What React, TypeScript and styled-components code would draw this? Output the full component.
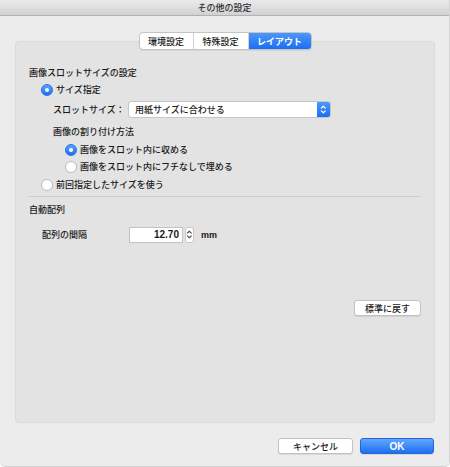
import React, { type FC } from 'react';
import styled, { createGlobalStyle } from 'styled-components';

const GlobalStyle = createGlobalStyle`
  html, body {
    margin: 0;
    padding: 0;
    background: #ffffff;
  }

  body {
    font-family: "Noto Sans CJK JP", "Noto Sans", sans-serif;
    font-size: 9px;
    font-weight: 500;
    color: #1a1a1a;
  }
`;

const Window = styled.div`
  display: flex;
  flex-direction: column;
  width: 449px;
  height: 466px;
  background: #ececec;
  border-right: 1px solid #d6d6d6;
  border-bottom: 1px solid #d2d2d2;
  border-radius: 0 0 5px 5px;
  overflow: hidden;
`;

const TitleBar = styled.div`
  display: flex;
  align-items: center;
  justify-content: center;
  height: 15px;
  background: linear-gradient(#ebebeb, #d2d2d2);
  border-bottom: 1px solid #b1b1b1;
  color: #2e2e2e;
  font-size: 9px;
  line-height: 1;
`;

const Body = styled.div`
  display: flex;
  flex-direction: column;
  padding: 16px 14px 0 15px;
`;

const TabRow = styled.div`
  display: flex;
  justify-content: center;
  margin-bottom: -9px;
  position: relative;
  z-index: 1;
`;

const Tabs = styled.div`
  display: flex;
  height: 16px;
  border: 1px solid #c4c4c4;
  border-radius: 4px;
  background: #ffffff;
  overflow: hidden;
  box-shadow: 0 1px 0 rgba(0, 0, 0, 0.06);
`;

const Tab = styled.div<{ $active?: boolean; $width: number }>`
  display: flex;
  align-items: center;
  justify-content: center;
  width: ${({ $width }) => `${$width}px`};
  color: ${({ $active }) => ($active ? '#ffffff' : '#1a1a1a')};
  background: ${({ $active }) =>
    $active ? 'linear-gradient(#4b98fa, #1b6ef4)' : 'transparent'};
  font-weight: ${({ $active }) => ($active ? 700 : 500)};
  & + & {
    border-left: 1px solid #d2d2d2;
  }
`;

const GroupBox = styled.div`
  display: flex;
  flex-direction: column;
  height: 382px;
  box-sizing: border-box;
  padding: 22px 13px 0 13px;
  background: #e3e3e3;
  border: 1px solid #dadada;
  border-radius: 4px;
`;

const Line = styled.div<{ $indent?: number; $mt?: number }>`
  display: flex;
  align-items: center;
  height: 17px;
  margin-left: ${({ $indent = 0 }) => `${$indent}px`};
  margin-top: ${({ $mt = 0 }) => `${$mt}px`};
  white-space: nowrap;
`;

const RadioDot = styled.span<{ $checked?: boolean }>`
  box-sizing: border-box;
  display: inline-flex;
  align-items: center;
  justify-content: center;
  width: 12px;
  height: 12px;
  margin-right: 3px;
  border-radius: 50%;
  border: 1px solid ${({ $checked }) => ($checked ? '#2a6fe8' : '#b9b9b9')};
  background: ${({ $checked }) =>
    $checked ? 'linear-gradient(#5aa2fb, #1f6ef2)' : '#ffffff'};

  &::after {
    content: '';
    display: ${({ $checked }) => ($checked ? 'block' : 'none')};
    width: 4px;
    height: 4px;
    border-radius: 50%;
    background: #ffffff;
  }
`;

const Label = styled.span<{ $width: number }>`
  display: inline-block;
  width: ${({ $width }) => `${$width}px`};
`;

const Select = styled.div`
  display: flex;
  width: 203px;
  height: 17px;
  box-sizing: border-box;
  border: 1px solid #c6c6c6;
  border-radius: 3px;
  background: #ffffff;
  overflow: hidden;
`;

const SelectText = styled.span`
  flex: 1;
  display: flex;
  align-items: center;
  padding-left: 6px;
`;

const SelectArrow = styled.span`
  display: flex;
  align-items: center;
  justify-content: center;
  width: 13px;
  background: linear-gradient(#4b98fa, #1b6ef4);
`;

const NumberInput = styled.div`
  display: flex;
  align-items: center;
  justify-content: flex-end;
  width: 54px;
  height: 16px;
  box-sizing: border-box;
  padding-right: 3px;
  background: #ffffff;
  border: 1px solid #c3c3c3;
  font-family: "Liberation Sans", "Noto Sans CJK JP", sans-serif;
  font-size: 10px;
  font-weight: 700;
`;

const Stepper = styled.span`
  display: flex;
  align-items: center;
  justify-content: center;
  width: 9px;
  height: 16px;
  box-sizing: border-box;
  margin-left: 2px;
  background: #ffffff;
  border: 1px solid #c6c6c6;
  border-radius: 3px;
`;

const Unit = styled.span`
  margin-left: 7px;
  font-family: "Liberation Sans", sans-serif;
  font-size: 9px;
  font-weight: 700;
`;

const Separator = styled.div`
  height: 1px;
  margin-top: 3px;
  background: #cfcfcf;
`;

const PushButton = styled.button<{ $primary?: boolean; $width: number }>`
  display: flex;
  align-items: center;
  justify-content: center;
  width: ${({ $width }) => `${$width}px`};
  height: 16px;
  padding: 0;
  border: 1px solid ${({ $primary }) => ($primary ? '#2464df' : '#c2c2c2')};
  border-radius: 3px;
  background: ${({ $primary }) =>
    $primary ? 'linear-gradient(#62a6fb, #1e6ff3)' : '#ffffff'};
  color: ${({ $primary }) => ($primary ? '#ffffff' : '#1a1a1a')};
  font-family: ${({ $primary }) =>
    $primary
      ? '"Liberation Sans", sans-serif'
      : '"Noto Sans CJK JP", sans-serif'};
  font-size: ${({ $primary }) => ($primary ? '10px' : '9px')};
  font-weight: ${({ $primary }) => ($primary ? 700 : 500)};
  box-shadow: 0 1px 0 rgba(0, 0, 0, 0.08);
`;

const ResetRow = styled.div`
  display: flex;
  justify-content: flex-end;
  margin-top: 57px;
`;

const Footer = styled.div`
  display: flex;
  justify-content: flex-end;
  gap: 7px;
  margin-top: 15px;
  padding-right: 1px;
`;

const UpDown: FC<{ $size: number; $color: string }> = ({ $size, $color }) => (
  <svg width={$size * 0.6} height={$size} viewBox="0 0 6 10" fill="none">
    <path
      d="M1.2 3.8 L3 2 L4.8 3.8 M1.2 6.2 L3 8 L4.8 6.2"
      stroke={$color}
      strokeWidth="1.1"
      strokeLinecap="round"
      strokeLinejoin="round"
    />
  </svg>
);

const Radio: FC<{ checked?: boolean; label: string; indent: number; mt?: number }> = ({
  checked,
  label,
  indent,
  mt,
}) => (
  <Line $indent={indent} $mt={mt}>
    <RadioDot $checked={checked} />
    {label}
  </Line>
);

export default function App() {
  return (
    <>
      <GlobalStyle />
      <Window>
        <TitleBar>その他の設定</TitleBar>
        <Body>
          <TabRow>
            <Tabs>
              <Tab $width={53}>環境設定</Tab>
              <Tab $width={54}>特殊設定</Tab>
              <Tab $width={62} $active>
                レイアウト
              </Tab>
            </Tabs>
          </TabRow>

          <GroupBox>
            <Line>画像スロットサイズの設定</Line>
            <Radio checked label="サイズ指定" indent={12} />
            <Line $indent={24} $mt={3}>
              <Label $width={75}>スロットサイズ：</Label>
              <Select>
                <SelectText>用紙サイズに合わせる</SelectText>
                <SelectArrow>
                  <UpDown $size={11} $color="#ffffff" />
                </SelectArrow>
              </Select>
            </Line>
            <Line $indent={24} $mt={5}>
              画像の割り付け方法
            </Line>
            <Radio checked label="画像をスロット内に収める" indent={36} mt={1} />
            <Radio label="画像をスロット内にフチなしで埋める" indent={36} />
            <Radio label="前回指定したサイズを使う" indent={12} mt={1} />
            <Separator />
            <Line $mt={4}>自動配列</Line>
            <Line $indent={13} $mt={8}>
              <Label $width={87}>配列の間隔</Label>
              <NumberInput>12.70</NumberInput>
              <Stepper>
                <UpDown $size={11} $color="#555" />
              </Stepper>
              <Unit>mm</Unit>
            </Line>
            <ResetRow>
              <PushButton $width={67}>標準に戻す</PushButton>
            </ResetRow>
          </GroupBox>

          <Footer>
            <PushButton $width={75}>キャンセル</PushButton>
            <PushButton $width={74} $primary>
              OK
            </PushButton>
          </Footer>
        </Body>
      </Window>
    </>
  );
}
